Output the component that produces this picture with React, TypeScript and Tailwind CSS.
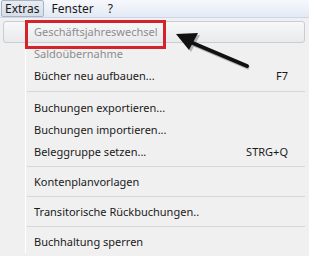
import React from "react";

type Item = { label?: string; shortcut?: string; disabled?: boolean; hover?: boolean; sep?: boolean; wide?: boolean };

const items: Item[] = [
  { label: "Geschäftsjahreswechsel", disabled: true, hover: true },
  { label: "Saldoübernahme", disabled: true },
  { label: "Bücher neu aufbauen...", shortcut: "F7" },
  { sep: true, wide: true },
  { label: "Buchungen exportieren..." },
  { label: "Buchungen importieren..." },
  { label: "Beleggruppe setzen...", shortcut: "STRG+Q" },
  { sep: true },
  { label: "Kontenplanvorlagen" },
  { sep: true },
  { label: "Transitorische Rückbuchungen.." },
  { sep: true },
  { label: "Buchhaltung sperren" },
];

const App = () => {
  return (
    <div
      className="relative w-[309px] h-[256px] overflow-hidden bg-[#f0f0f0] text-[11px] text-[#1a1a1a]"
      style={{ fontFamily: '"Noto Sans", "Open Sans", sans-serif' }}
    >
      {/* Menu bar */}
      <div className="flex h-[18px] items-center bg-gradient-to-b from-[#f6f8fc] to-[#e3eaf5] border-b border-[#ccd6e6] text-[12px]">
        <div className="ml-[1px] h-[17px] px-[3px] flex items-center rounded-[2px] border border-[#a8b4c4] bg-gradient-to-b from-[#e8edf3] to-[#d6dde8]">
          Extras
        </div>
        <div className="ml-[5px] px-[3px]">Fenster</div>
        <div className="ml-[8px] px-[3px]">?</div>
      </div>

      {/* Dropdown */}
      <div className="relative flex flex-col pt-[3px] pl-[3px] pr-[4px]">
        <div className="absolute left-[25px] top-0 bottom-0 w-px bg-[#e2e3e3] border-r border-white" />
        {items.map((it, i) =>
          it.sep ? (
            <div
              key={i}
              className={
                "ml-[24px] h-[2px] border-t border-[#d7d7d7] border-b-white " +
                (it.wide ? "my-[4px]" : "my-[3px]")
              }
            />
          ) : (
            <div
              key={i}
              className={
                "relative flex items-center h-[22px] pl-[30px] pr-[16px] " +
                (it.hover
                  ? "rounded-[3px] border border-[#c9cdd3] bg-gradient-to-b from-[#f7f8f9] to-[#e8eaec]"
                  : "border border-transparent") +
                (it.disabled ? " text-[#8d8d8d]" : "")
              }
            >
              <span className="flex-1 whitespace-nowrap">{it.label}</span>
              {it.shortcut && <span className="whitespace-nowrap">{it.shortcut}</span>}
            </div>
          )
        )}
      </div>

      {/* Red highlight box */}
      <div className="absolute left-[25px] top-[20px] w-[141px] h-[29px] border-[3px] border-[#d4232a]" />

      {/* Arrow */}
      <svg className="absolute left-0 top-0" width="309" height="256" viewBox="0 0 309 256">
        <g opacity="0.25" transform="translate(2,2)">
          <line x1="247" y1="66" x2="188" y2="41" stroke="#000" strokeWidth="4" />
          <polygon points="176,34 198,33 189,50" fill="#000" />
        </g>
        <line x1="247" y1="66" x2="188" y2="41" stroke="#111" strokeWidth="4" strokeLinecap="round" />
        <polygon points="176,34 198,33 189,50" fill="#111" />
      </svg>
    </div>
  );
};

export default App;
